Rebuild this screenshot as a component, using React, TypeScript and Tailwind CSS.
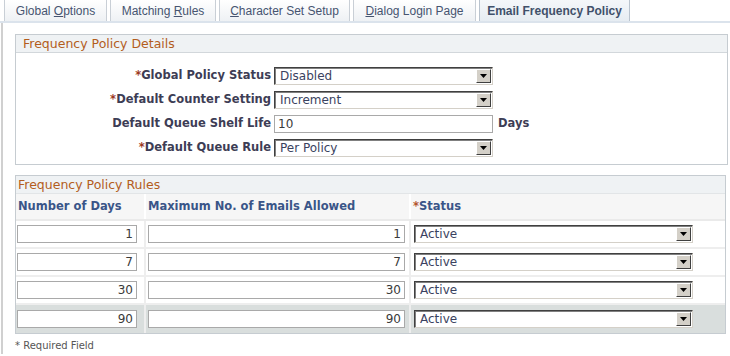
const tabs = [
  { pre: 'Global ', key: 'O', post: 'ptions', w: 'w-[103px]' },
  { pre: 'Matching ', key: 'R', post: 'ules', w: 'w-[106px]' },
  { pre: '', key: 'C', post: 'haracter Set Setup', w: 'w-[131px]' },
  { pre: '', key: 'D', post: 'ialog Login Page', w: 'w-[123px]' },
];

const rules = ['1', '7', '30', '90'];

function Select({ value, w }: { value: string; w: string }) {
  return (
    <div
      className={`${w} h-[18px] flex items-center bg-white border border-t-[#404040] border-l-[#404040] border-r-[#d4d0c8] border-b-[#d4d0c8] shadow-[inset_1px_1px_0_#808080]`}
    >
      <span className="flex-1 pl-[5px] text-[12px] leading-none text-[#3a4260]">{value}</span>
      <span className="w-[15px] h-[14px] mr-px bg-[#d4d0c8] border border-t-white border-l-white border-r-[#404040] border-b-[#404040] flex items-center justify-center">
        <svg width="7" height="4" viewBox="0 0 7 4">
          <path d="M0 0h7L3.5 4z" fill="#000" />
        </svg>
      </span>
    </div>
  );
}

function Field({ value, w, right }: { value: string; w: string; right?: boolean }) {
  return (
    <div
      className={`${w} h-[18px] flex items-center bg-white border border-[#a9a9a9] px-[3px] text-[12px] leading-none text-[#3a3a3a] ${right ? 'justify-end' : ''}`}
    >
      {value}
    </div>
  );
}

function Label({ text, req }: { text: string; req?: boolean }) {
  return (
    <div className="text-right pr-[3px] text-[11.5px] font-bold text-[#3d3d55] leading-none">
      {req && <span className="text-[#9c3a1f]">*</span>}
      {text}
    </div>
  );
}

export default function App() {
  return (
    <div className="w-[730px] h-[356px] bg-white overflow-hidden font-['DejaVu_Sans',Verdana,sans-serif]">
      <div className="h-[23px] flex items-end gap-[3px] pl-[4px] border-b-2 border-[#dbe3ec] font-['Liberation_Sans',Arial,sans-serif]">
        {tabs.map((t) => (
          <div
            key={t.post}
            className={`${t.w} h-[22px] border border-b-0 border-[#c9cfd6] bg-gradient-to-b from-white to-[#eef1f4] text-[12px] text-[#465470] flex items-center justify-center`}
          >
            <span className="whitespace-pre">
              {t.pre}
              <span className="underline">{t.key}</span>
              {t.post}
            </span>
          </div>
        ))}
        <div className="w-[151px] h-[22px] border border-b-0 border-[#b9c3ce] bg-gradient-to-b from-[#f4f7fa] to-[#e6ecf2] text-[12px] font-bold text-[#40506a] flex items-center justify-center">
          Email Frequency Policy
        </div>
      </div>

      <div className="ml-px border-l-2 border-[#d0d0d0] h-[331px] pt-[11px] pl-[12px]">
        <div className="w-[713px] h-[131px] border border-[#c6ccd1]">
          <div className="h-[18px] bg-[#eff2f4] border-b border-[#d2d7db] pl-[7px] text-[12.5px] leading-[18px] text-[#b35d1d]">
            Frequency Policy Details
          </div>
          <div className="grid grid-cols-[258px_auto] items-center gap-y-[6px] pt-[14px]">
            <Label text="Global Policy Status" req />
            <Select value="Disabled" w="w-[219px]" />
            <Label text="Default Counter Setting" req />
            <Select value="Increment" w="w-[219px]" />
            <Label text="Default Queue Shelf Life" />
            <div className="flex items-center gap-[5px]">
              <Field value="10" w="w-[219px]" />
              <span className="text-[11.5px] font-bold text-[#3d3d55]">Days</span>
            </div>
            <Label text="Default Queue Rule" req />
            <Select value="Per Policy" w="w-[219px]" />
          </div>
        </div>

        <div className="mt-[10px] w-[711px] border border-[#c6ccd1]">
          <div className="h-[18px] bg-[#eff2f4] border-b border-[#e2e5e7] pl-[2px] text-[12.5px] leading-[18px] text-[#b35d1d]">
            Frequency Policy Rules
          </div>
          <div className="flex h-[27px] bg-[#f6f6f6] border-b-2 border-[#eaeaea] text-[11.5px] font-bold text-[#3a5588]">
            <div className="w-[130px] pl-[2px] flex items-center border-r-2 border-white">Number of Days</div>
            <div className="w-[265px] pl-[2px] flex items-center border-r-2 border-white">
              Maximum No. of Emails Allowed
            </div>
            <div className="flex-1 pl-[2px] flex items-center">
              <span className="text-[#b3552d]">*</span>Status
            </div>
          </div>
          {rules.map((r, i) => (
            <div
              key={r}
              className={`flex h-[28px] items-center ${i === 3 ? 'bg-[#d9dedd]' : 'bg-white border-b-2 border-[#eeeeee]'}`}
            >
              <div className="w-[130px] h-full flex items-center pl-px border-r-2 border-[#eeeeee]">
                <Field value={r} w="w-[120px]" right />
              </div>
              <div className="w-[265px] h-full flex items-center pl-[2px] border-r-2 border-[#eeeeee]">
                <Field value={r} w="w-[257px]" right />
              </div>
              <div className="flex-1 pl-[3px]">
                <Select value="Active" w="w-[279px]" />
              </div>
            </div>
          ))}
        </div>

        <div className="mt-[4px] text-[10px] text-[#555]">* Required Field</div>
      </div>
    </div>
  );
}
